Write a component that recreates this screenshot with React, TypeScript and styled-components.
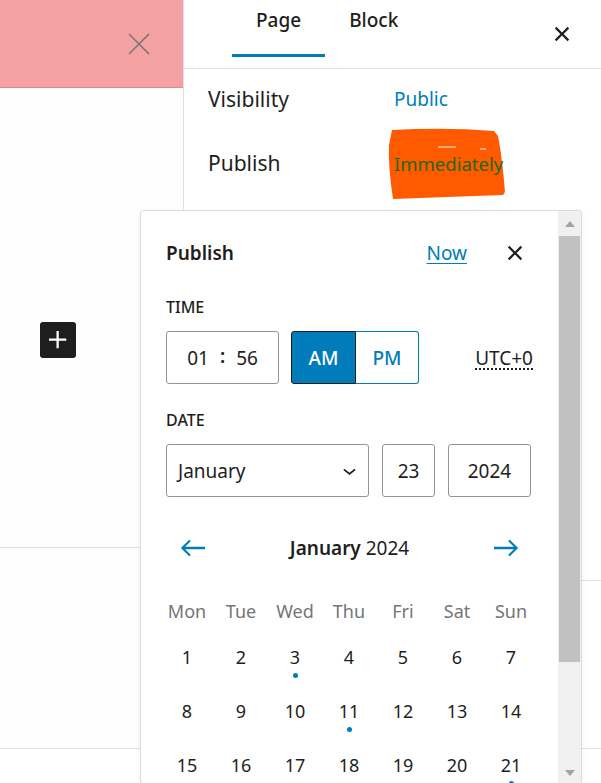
import React from 'react';
import styled, { createGlobalStyle } from 'styled-components';

const GlobalStyle = createGlobalStyle`
  html, body {
    margin: 0;
    padding: 0;
    background: #fff;
  }
  body {
    font-family: "Noto Sans", "Open Sans", sans-serif;
    color: #1e1e1e;
    overflow: hidden;
  }
  * {
    box-sizing: border-box;
  }
`;

const Screen = styled.div`
  position: relative;
  display: flex;
  width: 601px;
  height: 783px;
  overflow: hidden;
`;

/* left: editor canvas */
const Editor = styled.div`
  width: 184px;
  flex-shrink: 0;
  display: flex;
  flex-direction: column;
  border-right: 1px solid #e0e0e0;
`;

const Notice = styled.div`
  height: 88px;
  display: flex;
  align-items: center;
  justify-content: flex-end;
  padding-right: 32px;
  background: #f4a1a3;
  border-bottom: 1px solid #dc8b8d;
`;

const Canvas = styled.div<{ $height: number }>`
  height: ${(p) => p.$height}px;
  border-bottom: 1px solid #e0e0e0;
  background: #fefefe;
`;

const InserterArea = styled(Canvas)`
  padding: 234px 0 0 40px;
`;

const Inserter = styled.button`
  width: 36px;
  height: 36px;
  padding: 0;
  border: 0;
  border-radius: 3px;
  background: #1e1e1e;
  color: #fff;
  display: flex;
  align-items: center;
  justify-content: center;
`;

/* right: settings sidebar */
const Sidebar = styled.div`
  flex: 1;
  display: flex;
  flex-direction: column;
`;

const TabBar = styled.div`
  height: 69px;
  display: flex;
  align-items: flex-start;
  padding: 0 21px 0 48px;
  border-bottom: 1px solid #e0e0e0;
`;

const Tab = styled.div<{ $active?: boolean }>`
  height: 57px;
  padding: 6px 24px 0;
  font-size: 19px;
  font-weight: 500;
  line-height: 28px;
  color: #1e1e1e;
  box-shadow: ${(p) => (p.$active ? 'inset 0 -3px 0 #007cba' : 'none')};
`;

const IconButton = styled.button`
  width: 36px;
  height: 36px;
  padding: 0;
  border: 0;
  background: transparent;
  color: #1e1e1e;
  display: flex;
  align-items: center;
  justify-content: center;
  flex-shrink: 0;
`;

const TabClose = styled(IconButton)`
  margin-left: auto;
  align-self: center;
`;

const Summary = styled.div<{ $height: number }>`
  height: ${(p) => p.$height}px;
  padding: 6px 0 0 24px;
  display: flex;
  flex-direction: column;
  gap: 16px;
  border-bottom: 1px solid #e0e0e0;
`;

const Row = styled.div`
  height: 48px;
  display: grid;
  grid-template-columns: 186px 1fr;
  align-items: center;
`;

const RowLabel = styled.span`
  font-size: 21px;
  color: #1e1e1e;
`;

const RowValue = styled.span`
  font-size: 19px;
  color: #007cba;
`;

const Redacted = styled.span`
  position: relative;
  justify-self: start;
  font-size: 18.5px;
  color: #206a08;
`;

const Scribble = styled.svg`
  position: absolute;
  left: -8px;
  top: -25px;
`;

const RedactedText = styled.span`
  position: relative;
`;

/* publish date popover */
const Popover = styled.div`
  position: absolute;
  left: 140px;
  top: 210px;
  width: 442px;
  height: 574px;
  display: flex;
  background: #fff;
  border: 1px solid #dcdcdc;
  border-radius: 3px;
  box-shadow: 0 2px 6px rgba(0, 0, 0, 0.05);
  overflow: hidden;
`;

const PopoverBody = styled.div`
  flex: 1;
  padding: 24px 25px 0;
  overflow: hidden;
`;

const Header = styled.div`
  height: 36px;
  display: flex;
  align-items: center;
`;

const Title = styled.h2`
  flex: 1;
  margin: 0;
  font-size: 19px;
  font-weight: 600;
`;

const NowLink = styled.a`
  margin-right: 30px;
  font-size: 19px;
  color: #007cba;
  text-decoration: underline;
  text-underline-offset: 3px;
`;

const FieldLabel = styled.div`
  margin: 26px 0 14px;
  line-height: 20px;
  font-size: 16px;
  font-weight: 500;
  text-transform: uppercase;
  color: #1e1e1e;
`;

const FieldRow = styled.div<{ $gap?: number }>`
  height: 53px;
  display: flex;
  align-items: stretch;
  gap: ${(p) => p.$gap ?? 0}px;
`;

const Field = styled.div<{ $width: number }>`
  width: ${(p) => p.$width}px;
  display: flex;
  align-items: center;
  justify-content: center;
  border: 1px solid #949494;
  border-radius: 3px;
  font-size: 19px;
  color: #1e1e1e;
`;

const TimeField = styled(Field)`
  gap: 11px;
`;

const Colon = styled.span`
  font-weight: 600;
  margin-top: -3px;
`;

const SelectField = styled(Field)`
  justify-content: space-between;
  padding: 0 5px 0 11px;
`;

const Toggle = styled.div`
  display: flex;
  margin-left: 12px;
`;

const ToggleOption = styled.div<{ $on?: boolean; $first?: boolean }>`
  width: ${(p) => (p.$first ? 65 : 63)}px;
  display: flex;
  align-items: center;
  justify-content: center;
  font-size: 19px;
  font-weight: 500;
  color: ${(p) => (p.$on ? '#fff' : '#007cba')};
  background: ${(p) => (p.$on ? '#007cba' : '#fff')};
  border: ${(p) => (p.$on ? '1.5px solid #1e1e1e' : '1px solid #007cba')};
  border-left-width: ${(p) => (p.$first ? '1.5px' : '0')};
  border-radius: ${(p) => (p.$first ? '3px 0 0 3px' : '0 3px 3px 0')};
`;

const Timezone = styled.span`
  margin-left: auto;
  align-self: center;
  font-size: 19px;
  text-decoration: underline dotted;
  text-underline-offset: 4px;
`;

const MonthNav = styled.div`
  margin-top: 24px;
  height: 54px;
  display: flex;
  align-items: center;
  justify-content: space-between;
`;

const NavButton = styled(IconButton)`
  width: 54px;
  height: 54px;
  color: #007cba;
`;

const MonthTitle = styled.div`
  font-size: 19px;
  strong {
    font-weight: 600;
  }
`;

const WeekGrid = styled.div`
  margin: 16px -6px 0;
  display: grid;
  grid-template-columns: repeat(7, 54px);
`;

const Weekday = styled.div`
  height: 39px;
  display: flex;
  align-items: center;
  justify-content: center;
  font-size: 18px;
  color: #757575;
`;

const Day = styled.div`
  position: relative;
  height: 54px;
  display: flex;
  align-items: center;
  justify-content: center;
  font-size: 18px;
  color: #1e1e1e;
`;

const EventDot = styled.span`
  position: absolute;
  bottom: 6px;
  left: 50%;
  width: 5px;
  height: 5px;
  margin-left: -2.5px;
  border-radius: 50%;
  background: #007cba;
`;

const Scrollbar = styled.div`
  width: 23px;
  flex-shrink: 0;
  display: flex;
  flex-direction: column;
  background: #f0f0f0;
`;

const ScrollArrow = styled.div<{ $height: number }>`
  height: ${(p) => p.$height}px;
  display: flex;
  align-items: center;
  justify-content: center;
  color: #a3a3a3;
`;

const Thumb = styled.div`
  height: 426px;
  margin: 0 1px;
  background: #c1c1c1;
`;

const ScrollSpace = styled.div`
  flex: 1;
`;

const CloseIcon = ({ size = 36 }: { size?: number }) => (
  <svg width={size} height={size} viewBox="0 0 24 24" fill="currentColor">
    <path d="M12 13.06l3.712 3.713 1.061-1.06L13.061 12l3.712-3.712-1.06-1.06L12 10.938 8.288 7.227l-1.061 1.06L10.939 12l-3.712 3.712 1.06 1.061L12 13.061z" />
  </svg>
);

const weekdays = ['Mon', 'Tue', 'Wed', 'Thu', 'Fri', 'Sat', 'Sun'];
const days = Array.from({ length: 31 }, (_, i) => i + 1);
const eventDays = [3, 11, 21];

export default function App() {
  return (
    <Screen>
      <GlobalStyle />
      <Editor>
        <Notice>
          <svg width="24" height="24" viewBox="0 0 24 24" stroke="#777" strokeWidth="1.6" fill="none">
            <path d="M2 2l20 20M22 2L2 22" />
          </svg>
        </Notice>
        <InserterArea $height={460}>
          <Inserter aria-label="Add block">
            <svg width="36" height="36" viewBox="0 0 24 24" fill="currentColor">
              <path d="M11 12.5V17.5H12.5V12.5H17.5V11H12.5V6H11V11H6V12.5H11Z" />
            </svg>
          </Inserter>
        </InserterArea>
        <Canvas $height={201} />
      </Editor>

      <Sidebar>
        <TabBar>
          <Tab $active>Page</Tab>
          <Tab>Block</Tab>
          <TabClose aria-label="Close settings">
            <CloseIcon />
          </TabClose>
        </TabBar>
        <Summary $height={512}>
          <Row>
            <RowLabel>Visibility</RowLabel>
            <RowValue>Public</RowValue>
          </Row>
          <Row>
            <RowLabel>Publish</RowLabel>
            <Redacted>
              <Scribble width="124" height="76" viewBox="0 0 124 76">
                <path
                  d="M6 4 Q60 1 108 5 L112 10 Q116 30 119 66 L117 69 Q60 71 7 73 Q2 40 3 19 Z"
                  fill="#ff5a00"
                />
                <path d="M52 21 H70 M94 23 H100 M10 33 H13" stroke="#fff" strokeWidth="1.2" />
              </Scribble>
              <RedactedText>Immediately</RedactedText>
            </Redacted>
          </Row>
        </Summary>
        <Summary $height={168} />
      </Sidebar>

      <Popover>
        <PopoverBody>
          <Header>
            <Title>Publish</Title>
            <NowLink>Now</NowLink>
            <IconButton aria-label="Close">
              <CloseIcon />
            </IconButton>
          </Header>

          <FieldLabel>Time</FieldLabel>
          <FieldRow>
            <TimeField $width={113}>
              <span>01</span>
              <Colon>:</Colon>
              <span>56</span>
            </TimeField>
            <Toggle>
              <ToggleOption $on $first>
                AM
              </ToggleOption>
              <ToggleOption>PM</ToggleOption>
            </Toggle>
            <Timezone>UTC+0</Timezone>
          </FieldRow>

          <FieldLabel>Date</FieldLabel>
          <FieldRow $gap={13}>
            <SelectField $width={203}>
              <span>January</span>
              <svg width="27" height="27" viewBox="0 0 24 24" fill="currentColor">
                <path d="M17.5 11.6L12 16l-5.5-4.4.9-1.2L12 14l4.5-3.6 1 1.2z" />
              </svg>
            </SelectField>
            <Field $width={53}>23</Field>
            <Field $width={83}>2024</Field>
          </FieldRow>

          <MonthNav>
            <NavButton aria-label="Previous month">
              <svg width="36" height="36" viewBox="0 0 24 24" fill="currentColor">
                <path d="M20 11.2H6.8l3.7-3.7-1-1L3.9 12l5.6 5.5 1-1-3.7-3.7H20z" />
              </svg>
            </NavButton>
            <MonthTitle>
              <strong>January</strong> 2024
            </MonthTitle>
            <NavButton aria-label="Next month">
              <svg width="36" height="36" viewBox="0 0 24 24" fill="currentColor">
                <path d="m14.5 6.5-1 1 3.7 3.7H4v1.6h13.2l-3.7 3.7 1 1 5.6-5.5z" />
              </svg>
            </NavButton>
          </MonthNav>

          <WeekGrid>
            {weekdays.map((d) => (
              <Weekday key={d}>{d}</Weekday>
            ))}
            {days.map((d) => (
              <Day key={d}>
                {d}
                {eventDays.includes(d) && <EventDot />}
              </Day>
            ))}
          </WeekGrid>
        </PopoverBody>

        <Scrollbar>
          <ScrollArrow $height={25}>
            <svg width="10" height="6" viewBox="0 0 10 6" fill="currentColor">
              <path d="M0 6L5 0l5 6z" />
            </svg>
          </ScrollArrow>
          <Thumb />
          <ScrollSpace />
          <ScrollArrow $height={21}>
            <svg width="10" height="6" viewBox="0 0 10 6" fill="currentColor">
              <path d="M0 0l5 6 5-6z" />
            </svg>
          </ScrollArrow>
        </Scrollbar>
      </Popover>
    </Screen>
  );
}
